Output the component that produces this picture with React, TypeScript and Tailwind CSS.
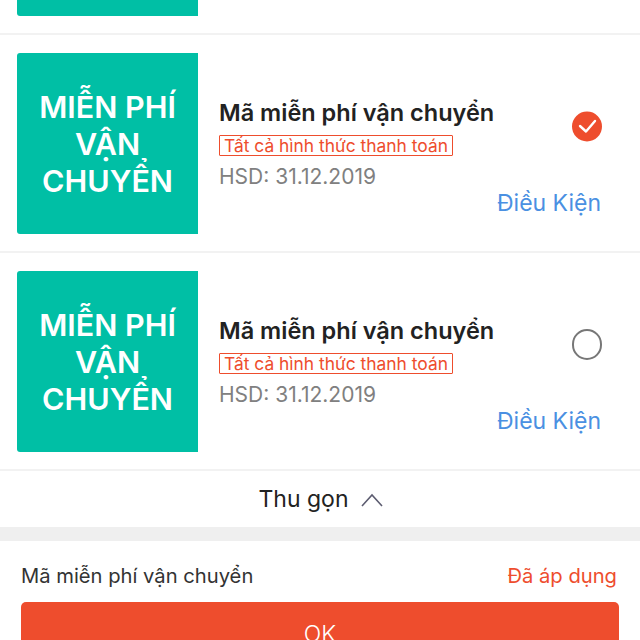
const VoucherRow = ({ checked = false }: { checked?: boolean }) => {
  return (
    <div className="flex h-[218px] shrink-0 items-center border-b-2 border-[#f2f2f2] pl-[17px] pr-[38px]">
      <div className="flex h-[181px] w-[181px] shrink-0 items-center justify-center rounded-l-[3px] bg-[#00bfa5] text-center text-[30.5px] font-semibold leading-[37px] text-white">
        <div>
          MIỄN PHÍ
          <br />
          VẬN
          <br />
          CHUYỂN
        </div>
      </div>
      <div className="relative h-full flex-1 pl-[21px]">
        <div className="pt-[62px] text-[23.5px] font-semibold leading-[32px] text-[#222222]">
          Mã miễn phí vận chuyển
        </div>
        <div className="mt-[6px] inline-block rounded-[1px] border border-[#ee4d2d] px-[4px] text-[17.4px] leading-[19px] text-[#ee4d2d]">
          Tất cả hình thức thanh toán
        </div>
        <div className="mt-[5px] text-[21px] leading-[28px] text-[#808080]">
          HSD: 31.12.2019
        </div>
        <div className="absolute right-[1px] top-[152px] text-[23px] leading-[32px] text-[#4a90e2]">
          Điều Kiện
        </div>
        <div className="absolute right-0 top-[76px]">
          {checked ? (
            <svg width="30" height="31" viewBox="0 0 30 31">
              <circle cx="15" cy="15.5" r="15" fill="#ee4d2d" />
              <path d="M8 15l6 5.5L23 10" fill="none" stroke="#fff" strokeWidth="2.4" strokeLinecap="round" strokeLinejoin="round" />
            </svg>
          ) : (
            <div className="h-[31px] w-[30px] rounded-full border-2 border-[#777777]" />
          )}
        </div>
      </div>
    </div>
  );
};

export default function App() {
  return (
    <div className="h-[640px] w-[640px] overflow-hidden bg-white font-['Inter','Noto_Sans',sans-serif]">
      <div className="mt-[-183px] flex flex-col">
        <VoucherRow />
        <VoucherRow checked />
        <VoucherRow />
      </div>
      <div className="flex h-[56px] items-center justify-center gap-[11px] pl-[2px] pt-[1px] text-[23px] text-[#222222]">
        <span>Thu gọn</span>
        <svg width="24" height="14" viewBox="0 0 24 14" fill="none">
          <path d="M2 13L12 2l10 11" stroke="#5c5c70" strokeWidth="1.6" />
        </svg>
      </div>
      <div className="h-[14px] bg-[#efefef]" />
      <div className="px-[21px]">
        <div className="flex h-[61px] items-center justify-between pr-[2px] pt-[9px] text-[20.2px] text-[#333333]">
          <span>Mã miễn phí vận chuyển</span>
          <span className="text-[#ee4d2d]">Đã áp dụng</span>
        </div>
        <button className="flex h-[60px] w-full items-center justify-center rounded-[5px] bg-[#ee4d2d] pt-[4px] text-[23px] font-light text-white">
          OK
        </button>
      </div>
    </div>
  );
}
